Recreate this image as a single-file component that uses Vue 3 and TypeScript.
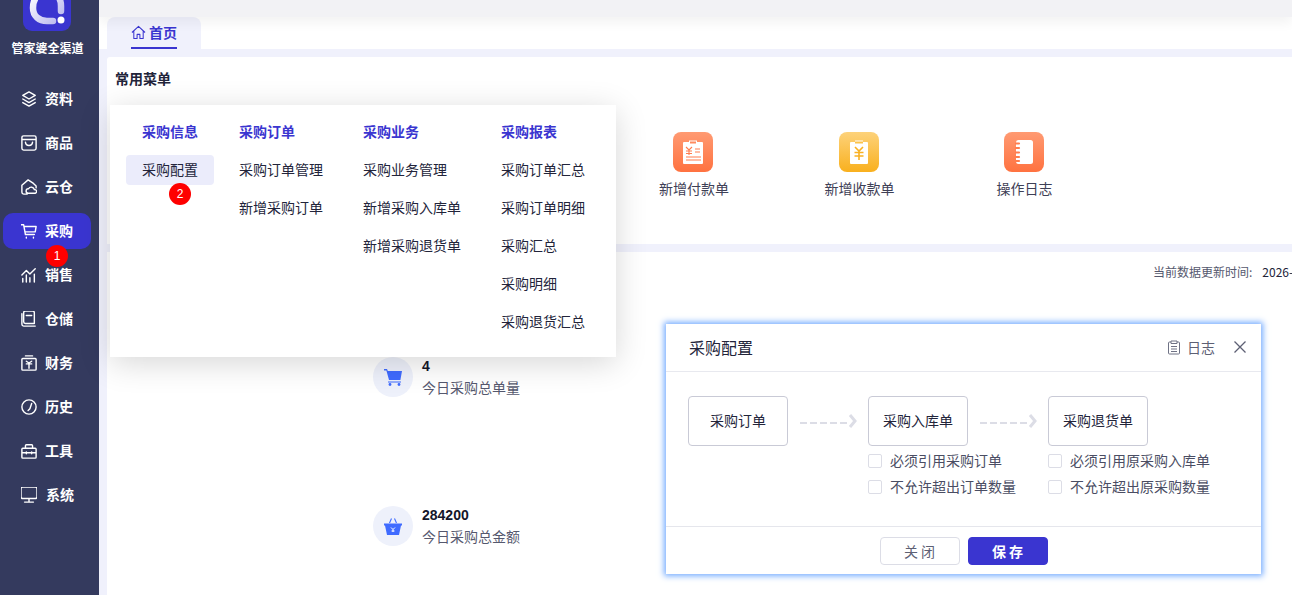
<script setup lang="ts">
interface NavItem {
  label: string
  icon: string
  active?: boolean
}

const navItems: NavItem[] = [
  { label: '资料', icon: 'M10 2 17 6 10 10 3 6ZM3 10l7 4 7-4M3 14l7 4 7-4' },
  { label: '商品', icon: 'M4 2h12a2 2 0 0 1 2 2v12a2 2 0 0 1-2 2H4a2 2 0 0 1-2-2V4a2 2 0 0 1 2-2ZM2 6h16M6 9c.5 5 7.5 5 8 0' },
  { label: '云仓', icon: 'M8 18H4a2 2 0 0 1-2-2V8l7-6 6 4 3 3v2M9 17a2.5 2.5 0 0 1 .5-5 3.5 3.5 0 0 1 6.5 1 2 2 0 0 1 1 4Z' },
  { label: '采购', icon: 'M1 3h3l2 11h10M4.500 5H18l-1 6H6M7 17v1M15 17v1', active: true },
  { label: '销售', icon: 'M2 10l5-5 4 4 6-6M3 14v4M7 10v8M11 13v5M16 9v9' },
  { label: '仓储', icon: 'M6 1h8a2 2 0 0 1 2 2v12H6a2 2 0 0 1-2-2V3a2 2 0 0 1 2-2ZM2 4v12a2 2 0 0 0 2 2h13M7 6h6' },
  { label: '财务', icon: 'M6 2h8M3 5h14a1 1 0 0 1 1 1v11a1 1 0 0 1-1 1H3a1 1 0 0 1-1-1V6a1 1 0 0 1 1-1ZM7 8l3 2 3-2M7 11h6M10 10v6' },
  { label: '历史', icon: 'M10 2a8 8 0 1 1-8 8 8 8 0 0 1 8-8ZM13 6l-2 6-2 2' },
  { label: '工具', icon: 'M3 7h14a1 1 0 0 1 1 1v9a1 1 0 0 1-1 1H3a1 1 0 0 1-1-1V8a1 1 0 0 1 1-1ZM6 7V4a1 1 0 0 1 1-1h6a1 1 0 0 1 1 1v3M2 12h16M7 11v2M13 11v2' },
  { label: '系统', icon: 'M3 1h14a2 2 0 0 1 2 2v9a2 2 0 0 1-2 2H3a2 2 0 0 1-2-2V3a2 2 0 0 1 2-2ZM10 14v4M5 18h10' }
]

const menuCols = [
  { title: '采购信息', items: ['采购配置'] },
  { title: '采购订单', items: ['采购订单管理', '新增采购订单'] },
  { title: '采购业务', items: ['采购业务管理', '新增采购入库单', '新增采购退货单'] },
  { title: '采购报表', items: ['采购订单汇总', '采购订单明细', '采购汇总', '采购明细', '采购退货汇总'] }
]

const flowBoxes = [
  { label: '采购订单', checks: [] as string[] },
  { label: '采购入库单', checks: ['必须引用采购订单', '不允许超出订单数量'] },
  { label: '采购退货单', checks: ['必须引用原采购入库单', '不允许超出原采购数量'] }
]
</script>

<template>
  <div class="app">
    <aside class="sidebar">
      <div class="logo">
        <svg width="48" height="47" viewBox="0 0 48 47">
          <defs>
            <linearGradient id="logoGrad" x1="0" y1="0" x2="1" y2="1">
              <stop offset="0" stop-color="#ffffff" />
              <stop offset="1" stop-color="#b9b8ee" />
            </linearGradient>
          </defs>
          <path d="M38 27 V22 C38 12 31 8 24 8 C14 8 10 16 10 24 C10 32 16 37 24 37 H30" fill="none" stroke="url(#logoGrad)" stroke-width="6.500" stroke-linecap="round" />
          <circle cx="38" cy="36" r="3.500" fill="#fff" />
        </svg>
      </div>
      <div class="brand">管家婆全渠道</div>
      <nav class="nav">
        <div v-for="item in navItems" :key="item.label" class="nav-item" :class="{ active: item.active }">
          <svg width="16" height="16" viewBox="1 1 18 18" fill="none" stroke="#fff" stroke-width="1.600" stroke-linejoin="round" stroke-linecap="round">
            <path :d="item.icon" />
          </svg>
          <span>{{ item.label }}</span>
        </div>
      </nav>
    </aside>

    <main class="main">
      <div class="topbar"></div>
      <div class="tabs">
        <div class="tab">
          <div class="tab-inner">
            <svg width="15" height="15" viewBox="0 0 16 16" fill="none" stroke="#3a35d0" stroke-width="1.100" stroke-linejoin="round">
              <path d="M1 8 8 1.500 15 8M3 6.500V14.500H6.500V10H9.500V14.500H13V6.500" />
            </svg>
            <span>首页</span>
          </div>
        </div>
      </div>

      <section class="panel quick">
        <h3 class="panel-title">常用菜单</h3>
        <div class="quick-row">
          <div class="quick-item">
            <div class="quick-icon orange">
              <svg width="22" height="26" viewBox="0 0 22 26">
                <path d="M2 3h5V1.500h8V3h5a1 1 0 0 1 1 1v20a1 1 0 0 1-1 1H2a1 1 0 0 1-1-1V4a1 1 0 0 1 1-1Z" fill="#fff" />
                <path d="M4 8l3 3 3-3M7 11v5M4 12h6M4 14.500h6M13 10h5M13 13h5M4 18h15M4 21h15" stroke="#ff7d4e" stroke-width="1.100" fill="none" />
                <path d="M8 2.500h6v2H8Z" fill="#ff8b5f" />
              </svg>
            </div>
            <span>新增付款单</span>
          </div>
          <div class="quick-item">
            <div class="quick-icon yellow">
              <svg width="20" height="26" viewBox="0 0 20 26">
                <path d="M2 3h4V1.500h8V3h4a1 1 0 0 1 1 1v20a1 1 0 0 1-1 1H2a1 1 0 0 1-1-1V4a1 1 0 0 1 1-1Z" fill="#fff" />
                <path d="M6 2.500h8v2H6Z" fill="#fbc34a" />
                <path d="M6 8l4 4 4-4M10 12v9M5.500 13.500h9M5.500 17h9" stroke="#f9b122" stroke-width="1.600" fill="none" />
              </svg>
            </div>
            <span>新增收款单</span>
          </div>
          <div class="quick-item">
            <div class="quick-icon orange">
              <svg width="20" height="26" viewBox="0 0 20 26">
                <rect x="2" y="1" width="17" height="24" rx="2.500" fill="#fff" />
                <path d="M2 4.500h3M2 9h3M2 13.500h3M2 18h3M2 22h3" stroke="#ff7d4e" stroke-width="2.200" stroke-linecap="round" />
              </svg>
            </div>
            <span>操作日志</span>
          </div>
        </div>
      </section>

      <section class="panel stats">
        <div class="updated">当前数据更新时间:<em>2026-06-18 10:24:36</em></div>
        <div class="stat">
          <div class="stat-icon">
            <svg width="20" height="20" viewBox="0 0 20 20">
              <path d="M1 2h3l.8 2H19l-1.600 9H6L3.400 3.400H1Z" fill="#3f6bff" />
              <path d="M5 15h13" stroke="#3f6bff" stroke-width="1" />
              <circle cx="7" cy="17.500" r="1.400" fill="#3f6bff" />
              <circle cx="16" cy="17.500" r="1.400" fill="#3f6bff" />
            </svg>
          </div>
          <div>
            <div class="stat-value">4</div>
            <div class="stat-label">今日采购总单量</div>
          </div>
        </div>
        <div class="stat">
          <div class="stat-icon">
            <svg width="20" height="20" viewBox="0 0 20 20">
              <path d="M6.500 7 8.500 2.500M13.500 7 11.500 2.500" stroke="#3f6bff" stroke-width="1.100" fill="none" />
              <path d="M1 7.500h18v2h-1L16 19H4L2 9.500H1Z" fill="#3f6bff" />
              <path d="M8 11.500l2 2 2-2M10 13.500v2.500M8.500 15h3" stroke="#fff" stroke-width="1" fill="none" />
            </svg>
          </div>
          <div>
            <div class="stat-value">284200</div>
            <div class="stat-label">今日采购总金额</div>
          </div>
        </div>
      </section>
    </main>

    <div class="mega-menu">
      <div v-for="col in menuCols" :key="col.title" class="menu-col">
        <div class="menu-title">{{ col.title }}</div>
        <div v-for="(entry, i) in col.items" :key="entry" class="menu-entry" :class="{ current: col.title === '采购信息' && i === 0 }">{{ entry }}</div>
      </div>
    </div>

    <div class="dialog">
      <header class="dialog-head">
        <span class="dialog-title">采购配置</span>
        <div class="dialog-tools">
          <svg class="log-icon" width="14" height="15" viewBox="0 0 14 15" fill="none" stroke="#6f7285" stroke-width="1">
            <path d="M4 2H2.500a1 1 0 0 0-1 1v10a1 1 0 0 0 1 1h9a1 1 0 0 0 1-1V3a1 1 0 0 0-1-1H10M4 1h6v2.500H4ZM4 6.500h6M4 9h6M4 11.500h6" />
          </svg>
          <span class="log-text">日志</span>
          <svg class="close-x" width="14" height="14" viewBox="0 0 14 14" fill="none" stroke="#5d6074" stroke-width="1.300">
            <path d="M1.500 1.500 12.500 12.500M12.500 1.500 1.500 12.500" />
          </svg>
        </div>
      </header>
      <div class="dialog-body">
        <template v-for="(box, i) in flowBoxes" :key="box.label">
          <div v-if="i > 0" class="flow-arrow">
            <svg width="57" height="18" viewBox="0 0 57 18" fill="none" stroke="#dcdde6" stroke-width="2">
              <path d="M0 10h47" stroke-dasharray="7 3" />
              <path d="M50 2l5 6-5 6" stroke-width="3" />
            </svg>
          </div>
          <div class="flow-col">
            <div class="flow-box">{{ box.label }}</div>
            <label v-for="c in box.checks" :key="c" class="check">
              <i></i><span>{{ c }}</span>
            </label>
          </div>
        </template>
      </div>
      <footer class="dialog-foot">
        <button class="btn">关 闭</button>
        <button class="btn primary">保 存</button>
      </footer>
    </div>

    <span class="badge badge-one">1</span>
    <span class="badge badge-two">2</span>
  </div>
</template>

<style scoped>
.app {
  position: relative;
  display: flex;
  width: 1292px;
  height: 595px;
  overflow: hidden;
  font-family: "Noto Sans CJK SC", "Liberation Sans", sans-serif;
  font-size: 14px;
  color: #22243a;
  background: #f0f1fc;
}

.sidebar {
  flex: 0 0 99px;
  display: flex;
  flex-direction: column;
  background: #343a5e;
  color: #fff;
  z-index: 2;
}

.logo {
  width: 48px;
  height: 47px;
  margin: -16px 0 0 23px;
  background: #3a35d0;
  border-radius: 9px;
  flex: none;
}

.brand {
  margin-top: 8px;
  padding-right: 4px;
  text-align: center;
  font-size: 12px;
  font-weight: 700;
  line-height: 18px;
}

.nav {
  margin-top: 24px;
}

.nav-item {
  display: flex;
  align-items: center;
  gap: 8px;
  height: 36px;
  width: 88px;
  margin: 0 0 8px 3px;
  padding-left: 18px;
  box-sizing: border-box;
  border-radius: 10px;
  font-weight: 700;
  line-height: 20px;
}

.nav-item span {
  padding-bottom: 2px;
}

.nav-item:last-child span {
  margin-left: 1px;
}

.nav-item.active {
  background: #3a35d0;
}

.main {
  flex: 1;
  min-width: 0;
  display: flex;
  flex-direction: column;
}

.topbar {
  flex: 0 0 17px;
  position: relative;
  z-index: 1;
  background: #f2f2f5;
  box-shadow: 0 6px 12px rgba(0, 0, 0, 0.05);
}

.tabs {
  flex: 0 0 32px;
  padding-left: 8px;
  background: #fff;
}

.tab {
  width: 94px;
  height: 32px;
  padding-left: 24px;
  box-sizing: border-box;
  background: #f0f1fc;
  border-radius: 8px 8px 0 0;
}

.tab-inner {
  display: flex;
  align-items: center;
  gap: 3px;
  width: 46px;
  height: 32px;
  box-sizing: border-box;
  border-bottom: 2px solid #3a35d0;
  color: #3a35d0;
  font-weight: 700;
  line-height: 20px;
}

.tab-inner svg {
  flex: none;
}

.panel {
  margin-left: 8px;
  background: #fff;
}

.quick {
  flex: 0 0 187px;
  margin-top: 8px;
  box-sizing: border-box;
  padding: 11px 8px 0;
  border-radius: 3px 0 0 0;
}

.panel-title {
  margin: 0;
  font-size: 14px;
  font-weight: 700;
  line-height: 20px;
}

.quick-row {
  display: grid;
  grid-template-columns: 166px 165px 165px;
  margin: 44px 0 0 495px;
}

.quick-item {
  display: flex;
  flex-direction: column;
  align-items: center;
  gap: 6px;
  line-height: 20px;
  color: #3e4056;
}

.quick-item span {
  margin-left: 2px;
}

.quick-icon {
  display: flex;
  align-items: center;
  justify-content: center;
  width: 40px;
  height: 40px;
  border-radius: 8px;
}

.orange {
  background: linear-gradient(180deg, #ff9a72, #ff7240);
}

.yellow {
  background: linear-gradient(180deg, #fdd27a, #f9b01e);
}

.stats {
  flex: 1;
  margin-top: 8px;
  position: relative;
  padding: 105px 0 0 266px;
}

.updated {
  position: absolute;
  top: 11px;
  left: 1046px;
  white-space: nowrap;
  font-size: 12px;
  line-height: 17px;
  color: #55586e;
}

.updated em {
  font-style: normal;
  color: #22243a;
  margin-left: 10px;
}

.stat {
  display: flex;
  align-items: flex-start;
  gap: 9px;
  height: 149px;
}

.stat-icon {
  display: flex;
  align-items: center;
  justify-content: center;
  width: 40px;
  height: 40px;
  border-radius: 50%;
  background: #eef1fb;
}

.stat-value {
  font-family: "Liberation Sans", sans-serif;
  font-size: 14px;
  font-weight: 700;
  line-height: 18px;
  color: #14162a;
}

.stat-label {
  margin-top: 1px;
  font-size: 14px;
  line-height: 22px;
  color: #55586e;
}

.mega-menu {
  position: absolute;
  left: 110px;
  top: 105px;
  width: 506px;
  height: 252px;
  display: flex;
  gap: 8px;
  padding: 16px 0 0 16px;
  box-sizing: border-box;
  background: #fff;
  box-shadow: 0 6px 30px rgba(0, 0, 0, 0.16);
  z-index: 3;
}

.menu-col {
  display: flex;
  flex-direction: column;
  gap: 8px;
}

.menu-col:first-child {
  margin-right: 1px;
}

.menu-title {
  padding: 0 16px 2px;
  height: 20px;
  line-height: 20px;
  margin-bottom: 4px;
  color: #3a35d0;
  font-weight: 700;
}

.menu-entry {
  height: 28px;
  padding: 0 16px 2px;
  line-height: 28px;
  white-space: nowrap;
  border-radius: 4px;
  color: #22243a;
}

.menu-entry.current {
  background: #ebecfb;
}

.dialog {
  position: absolute;
  left: 666px;
  top: 324px;
  width: 595px;
  height: 250px;
  display: flex;
  flex-direction: column;
  background: #fff;
  box-shadow: 0 0 6px 2px rgba(110, 168, 255, 0.95);
  z-index: 4;
}

.dialog-head {
  flex: 0 0 48px;
  display: flex;
  align-items: center;
  justify-content: space-between;
  padding: 0 14px 2px 23px;
  box-sizing: border-box;
  border-bottom: 1px solid #e8e9ef;
}

.dialog-title {
  font-size: 16px;
  line-height: 22px;
  color: #22243a;
}

.dialog-tools {
  display: flex;
  align-items: center;
  color: #5d6074;
}

.log-icon {
  margin-top: 2px;
}

.log-text {
  margin-left: 6px;
}

.close-x {
  margin-left: 18px;
}

.dialog-body {
  flex: 1;
  display: flex;
  padding: 24px 0 0 22px;
}

.flow-col {
  width: 100px;
}

.flow-box {
  display: flex;
  align-items: center;
  justify-content: center;
  width: 100px;
  height: 50px;
  padding-bottom: 2px;
  box-sizing: border-box;
  margin-bottom: 2px;
  border: 1px solid #c9cad6;
  border-radius: 4px;
  color: #22243a;
}

.flow-arrow {
  flex: 0 0 80px;
  padding: 17px 0 0 12px;
  box-sizing: border-box;
}

.check {
  display: flex;
  align-items: center;
  gap: 8px;
  height: 26px;
  white-space: nowrap;
  color: #4a4d63;
}

.check span {
  padding-bottom: 2px;
}

.check i {
  flex: none;
  width: 14px;
  height: 14px;
  box-sizing: border-box;
  border: 1px solid #dcdde6;
  border-radius: 2px;
  background: #fff;
}

.dialog-foot {
  flex: 0 0 48px;
  display: flex;
  justify-content: center;
  align-items: flex-start;
  gap: 8px;
  padding-top: 10px;
  box-sizing: border-box;
  border-top: 1px solid #e5e6ec;
}

.btn {
  width: 80px;
  height: 28px;
  padding: 0;
  border: 1px solid #dcdde6;
  border-radius: 4px;
  background: #fff;
  color: #5d6074;
  font-family: inherit;
  font-size: 14px;
  line-height: 20px;
}

.btn.primary {
  border-color: #3a35d0;
  background: #3a35d0;
  color: #fff;
  font-weight: 700;
}

.badge {
  position: absolute;
  width: 22px;
  height: 22px;
  border-radius: 50%;
  background: #fe0000;
  color: #fff;
  font-family: "Liberation Sans", sans-serif;
  font-size: 12px;
  line-height: 22px;
  text-align: center;
  z-index: 5;
}

.badge-one {
  left: 46px;
  top: 245px;
}

.badge-two {
  left: 169px;
  top: 183px;
}
</style>
